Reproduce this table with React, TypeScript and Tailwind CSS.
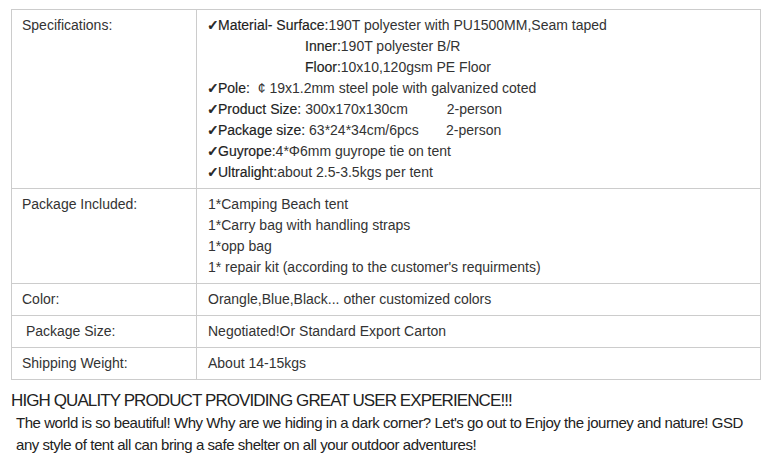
const specs = [
  { check: true, label: "Material- Surface:", value: "190T polyester with PU1500MM,Seam taped" },
  { label: "Inner:", value: "190T polyester B/R", indent: true },
  { label: "Floor:", value: "10x10,120gsm PE Floor", indent: true },
  { check: true, label: "Pole:", value: "  ¢ 19x1.2mm steel pole with galvanized coted" },
  { check: true, label: "Product Size:", value: " 300x170x130cm          2-person" },
  { check: true, label: "Package size:", value: " 63*24*34cm/6pcs       2-person" },
  { check: true, label: "Guyrope:", value: "4*Φ6mm guyrope tie on tent" },
  { check: true, label: "Ultralight:", value: "about 2.5-3.5kgs per tent" },
];

const rows = [
  {
    label: "Package Included:",
    lines: [
      "1*Camping Beach tent",
      "1*Carry bag with handling straps",
      "1*opp bag",
      "1* repair kit (according to the customer's requirments)",
    ],
  },
  { label: "Color:", lines: ["Orangle,Blue,Black... other customized colors"] },
  { label: " Package Size:", lines: ["Negotiated!Or Standard Export Carton"] },
  { label: "Shipping Weight:", lines: ["About 14-15kgs"] },
];

export default function App() {
  return (
    <div className="w-[769px] h-[457px] bg-white text-[#333] font-['Liberation_Sans',Arial,sans-serif] overflow-hidden pt-[9px]">
      <table className="ml-[11px] w-[750px] border-collapse text-[14px] leading-[21px]">
        <tbody>
          <tr>
            <td className="w-[185px] border border-[#cccccc] align-top pl-[10px] py-[5px] whitespace-pre">
              Specifications:
            </td>
            <td className="border border-[#cccccc] align-top pl-[10px] py-[5px]">
              {specs.map((s) => (
                <div key={s.label} className="whitespace-pre h-[21px]">
                  {s.indent && <span className="inline-block w-[98px]" />}
                  {s.check && (
                    <span className="inline-block w-[11px] leading-none font-['DejaVu_Sans',sans-serif] text-[14px] text-[#222] [-webkit-text-stroke:0.6px]">✓</span>
                  )}
                  <span className="text-[#222] [-webkit-text-stroke:0.15px]">{s.label}</span>
                  {s.value}
                </div>
              ))}
            </td>
          </tr>
          {rows.map((r) => (
            <tr key={r.label}>
              <td className="border border-[#cccccc] align-top pl-[10px] py-[5px] whitespace-pre">
                {r.label}
              </td>
              <td className="border border-[#cccccc] align-top pl-[11px] py-[5px]">
                {r.lines.map((l) => (
                  <div key={l}>{l}</div>
                ))}
              </td>
            </tr>
          ))}
        </tbody>
      </table>
      <div className="mt-[11px] pl-[11px] text-[#222] text-[17px] leading-[20px] tracking-[-0.9px]">
        HIGH QUALITY PRODUCT PROVIDING GREAT USER EXPERIENCE!!!
      </div>
      <p className="mt-[1px] pl-[16px] pr-[6px] text-[#222] text-[15px] leading-[22px] tracking-[-0.45px]">
        The world is so beautiful! Why Why are we hiding in a dark corner? Let's go out to Enjoy the journey and nature! GSD any style of tent all can bring a safe shelter on all your outdoor adventures!
      </p>
    </div>
  );
}
